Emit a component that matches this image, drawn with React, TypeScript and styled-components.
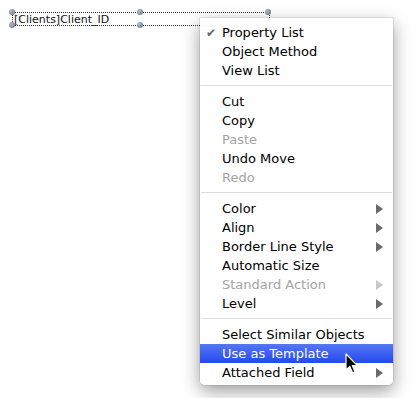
import React from 'react';
import styled, {createGlobalStyle} from "styled-components";

const GlobalStyle = createGlobalStyle`
  html, body {
    margin: 0;
    background: #ffffff;
  }
  body {
    font-family: "DejaVu Sans", "Liberation Sans", sans-serif;
  }
`

const Canvas = styled.div`
  position: relative;
  width: 420px;
  height: 398px;
  box-sizing: border-box;
  padding: 12px 0 0 12px;
  overflow: hidden;
  background: #ffffff;
`

// the selected field object on the form editor
const FieldBox = styled.div`
  position: relative;
  width: 255px;
  height: 12px;
  border: 1px dotted #333;
  font-size: 11px;
  line-height: 13px;
  color: #111;
  padding-left: 1px;
  white-space: nowrap;
`

const Handle = styled.div<{ $x: 'left' | 'mid' | 'right'; $y: 'top' | 'bottom' }>`
  position: absolute;
  left: ${p => (p.$x === 'left' ? '-4px' : p.$x === 'mid' ? '124px' : '252px')};
  top: ${p => (p.$y === 'top' ? '-4px' : '9px')};
  width: 6px;
  height: 6px;
  border-radius: 50%;
  background: radial-gradient(circle at 35% 35%, #b5bccb, #5d6a80);
`

const Menu = styled.div`
  position: absolute;
  left: 200px;
  top: 18px;
  width: 193px;
  padding: 5px 0 3px 0;
  background: rgba(255, 255, 255, 0.97);
  border-radius: 0 0 5px 5px;
  box-shadow: 0 0 0 1px rgba(0, 0, 0, 0.08), 0 6px 18px rgba(0, 0, 0, 0.4);
  font-size: 13px;
`

const Item = styled.div<{ $disabled?: boolean; $active?: boolean }>`
  display: flex;
  align-items: center;
  height: 19px;
  padding: 0 10px 0 6px;
  color: ${p => (p.$active ? '#ffffff' : p.$disabled ? '#a3a3a3' : '#000000')};
  background: ${p => (p.$active ? 'linear-gradient(#5577f5, #2449ee)' : 'transparent')};
  white-space: nowrap;
`

const Check = styled.span`
  width: 16px;
  color: #666666;
  font-size: 12px;
`

const Label = styled.span`
  flex: 1;
`

const Arrow = styled.span<{ $disabled?: boolean }>`
  width: 0;
  height: 0;
  border-top: 5px solid transparent;
  border-bottom: 5px solid transparent;
  border-left: 7px solid ${p => (p.$disabled ? '#c8c8c8' : '#6a6a6a')};
`

const Separator = styled.div`
  height: 1px;
  margin: 5px 1px 6px 1px;
  background: #dcdcdc;
`

const Pointer = styled.svg`
  position: absolute;
  left: 345px;
  top: 353px;
`

type Entry = { label: string; checked?: boolean; disabled?: boolean; submenu?: boolean; active?: boolean } | 'sep'

const entries: Entry[] = [
    {label: 'Property List', checked: true},
    {label: 'Object Method'},
    {label: 'View List'},
    'sep',
    {label: 'Cut'},
    {label: 'Copy'},
    {label: 'Paste', disabled: true},
    {label: 'Undo Move'},
    {label: 'Redo', disabled: true},
    'sep',
    {label: 'Color', submenu: true},
    {label: 'Align', submenu: true},
    {label: 'Border Line Style', submenu: true},
    {label: 'Automatic Size'},
    {label: 'Standard Action', disabled: true, submenu: true},
    {label: 'Level', submenu: true},
    'sep',
    {label: 'Select Similar Objects'},
    {label: 'Use as Template', active: true},
    {label: 'Attached Field', submenu: true},
]

const App: React.FC = () => {
    return (
        <Canvas>
            <GlobalStyle/>
            <FieldBox>
                [Clients]Client_ID
                <Handle $x="left" $y="top"/>
                <Handle $x="mid" $y="top"/>
                <Handle $x="right" $y="top"/>
                <Handle $x="left" $y="bottom"/>
                <Handle $x="mid" $y="bottom"/>
                <Handle $x="right" $y="bottom"/>
            </FieldBox>
            <Menu>
                {entries.map((e, i) => e === 'sep'
                    ? <Separator key={i}/>
                    : (
                        <Item key={i} $disabled={e.disabled} $active={e.active}>
                            <Check>{e.checked ? '✔' : ''}</Check>
                            <Label>{e.label}</Label>
                            {e.submenu && <Arrow $disabled={e.disabled}/>}
                        </Item>
                    ))}
            </Menu>
            <Pointer width="14" height="22" viewBox="0 0 14 22">
                <path d="M1 1 L1 17 L4.8 13.4 L7.6 19.8 L10 18.8 L7.3 12.6 L12.4 12.6 Z"
                      fill="#000" stroke="#fff" strokeWidth="1.2" strokeLinejoin="round"/>
            </Pointer>
        </Canvas>
    );
}

export default App;
